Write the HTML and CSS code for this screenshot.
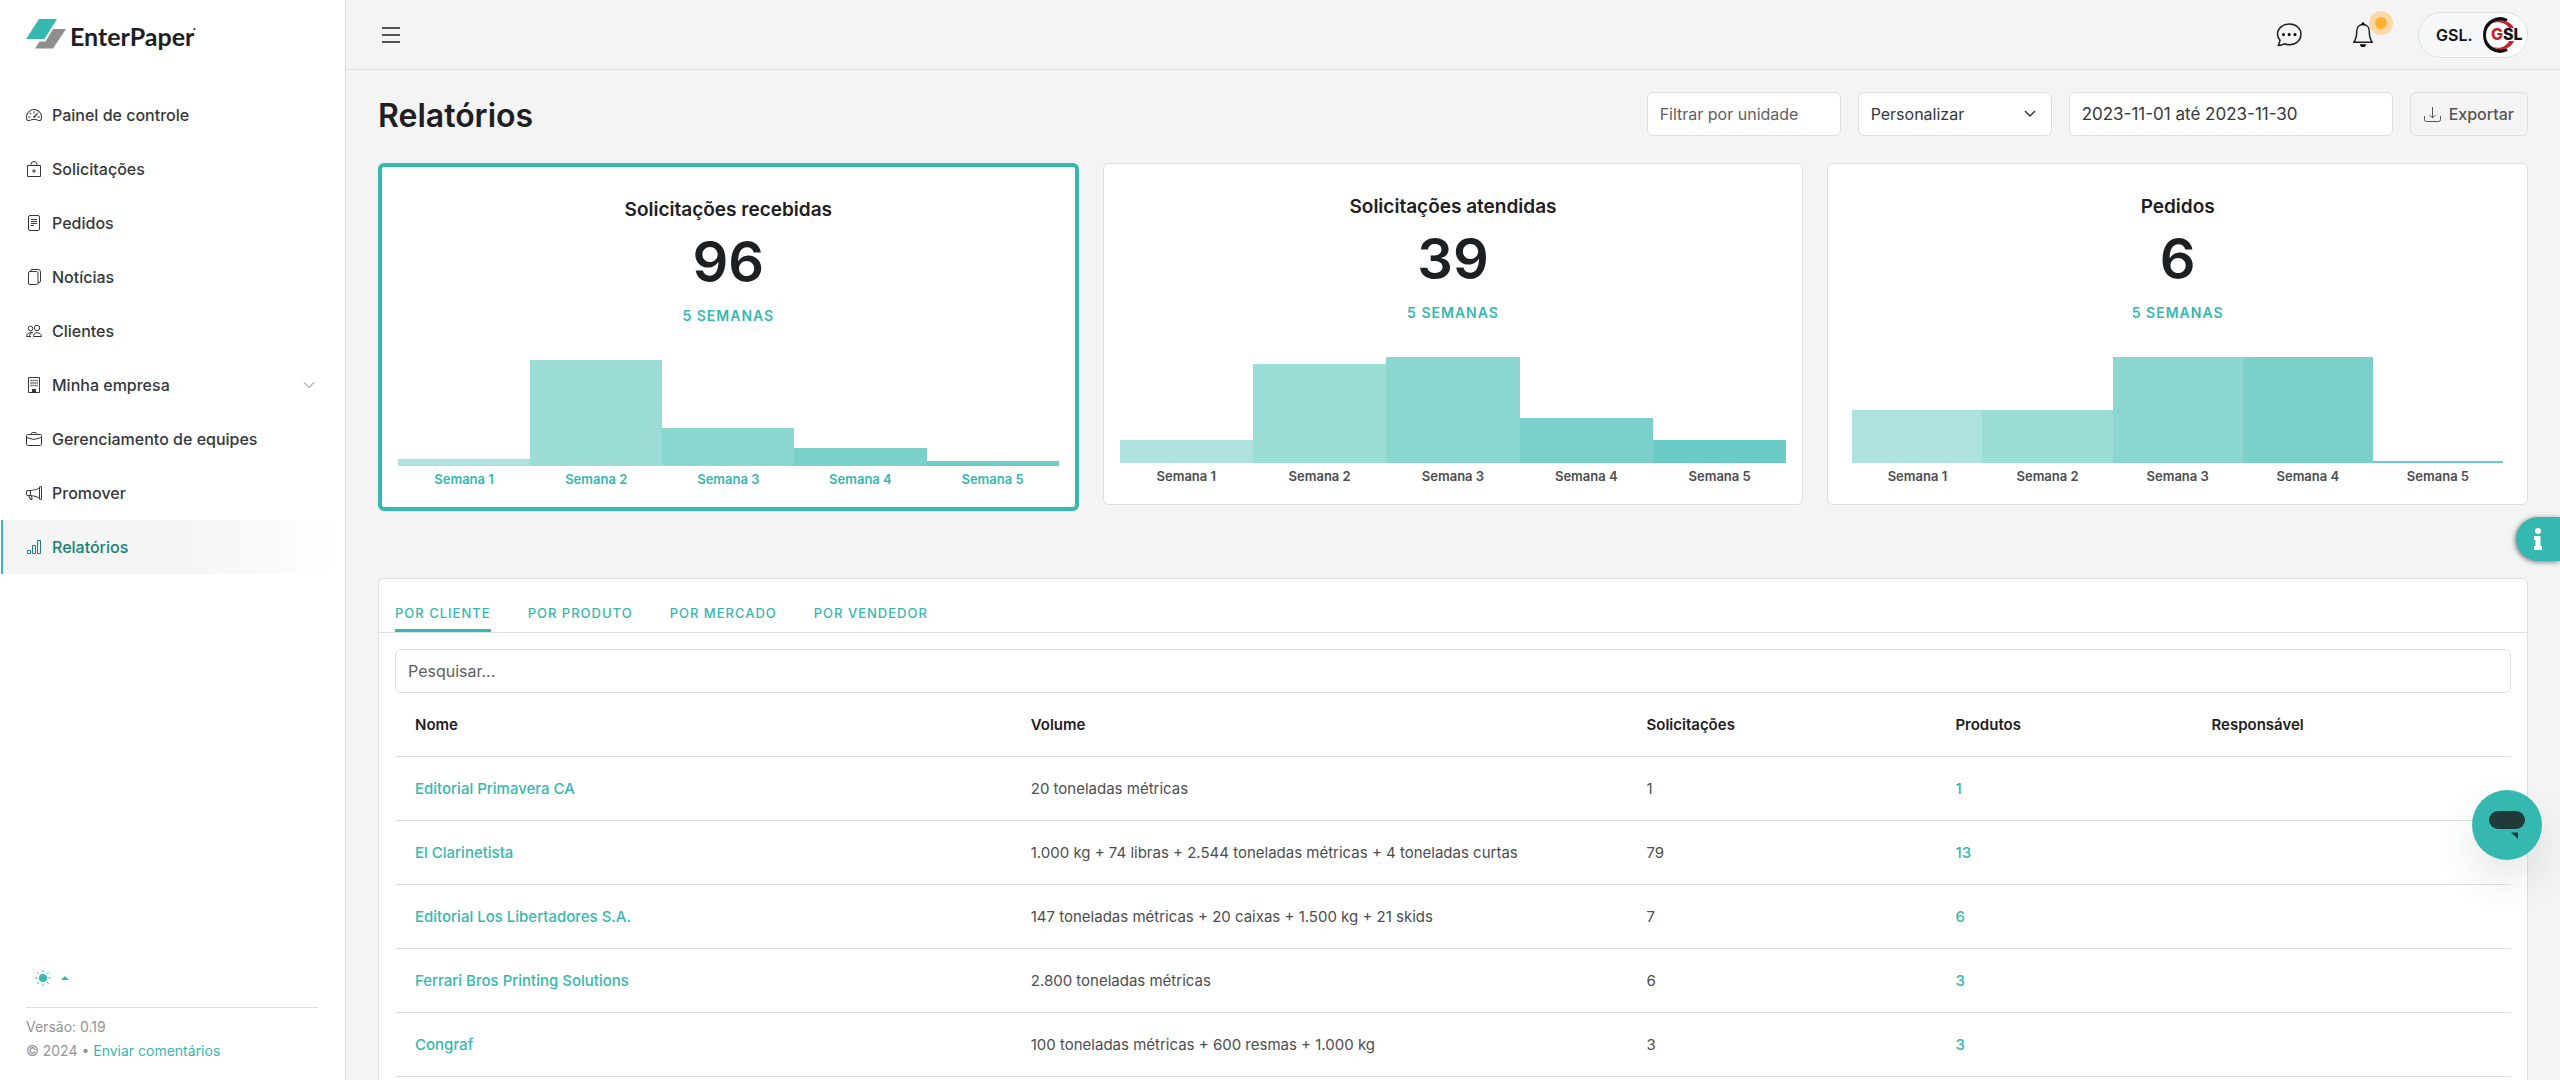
FILE: index.html
```html
<!DOCTYPE html>
<html lang="pt-BR">
<head>
<meta charset="utf-8">
<meta name="viewport" content="width=device-width, initial-scale=1">
<title>EnterPaper – Relatórios</title>
<link rel="stylesheet" href="styles.css">
</head>
<body>
<div class="app">
  <aside class="sidebar">
    <a class="brand" href="#" aria-label="EnterPaper">
      <svg class="brand-mark" width="40" height="30" viewBox="0 0 40 30"><path d="M13 0h18L18.500 20H0z" fill="#35b8b0"/><path d="M27 10h13L27 29.500H9l4.500-7h6z" fill="#8f8f8f"/></svg>
      <span class="brand-name">EnterPaper</span>
      <svg class="brand-dot" width="3" height="12" viewBox="0 0 3 12"><circle cx="1.500" cy="10" r="1" fill="#1d2023"/></svg>
    </a>
    <nav class="menu">
      <a class="menu-item" href="#"><svg class="icon" viewBox="0 0 16 16"><path d="M8 4a.5.5 0 0 1 .5.5V6a.5.5 0 0 1-1 0V4.500A.5.5 0 0 1 8 4M3.732 5.732a.5.5 0 0 1 .707 0l.915.914a.5.5 0 1 1-.708.708l-.914-.915a.5.5 0 0 1 0-.707M2 10a.5.5 0 0 1 .5-.5h1.586a.5.5 0 0 1 0 1H2.500A.5.5 0 0 1 2 10m9.500 0a.5.5 0 0 1 .5-.5h1.500a.5.5 0 0 1 0 1H12a.5.5 0 0 1-.5-.5m.754-4.246a.39.39 0 0 0-.527-.02L7.547 9.310a.91.91 0 1 0 1.302 1.258l3.434-4.297a.39.39 0 0 0-.029-.518z"/><path fill-rule="evenodd" d="M0 10a8 8 0 1 1 15.547 2.661c-.442 1.253-1.845 1.602-2.932 1.250C11.309 13.488 9.475 13 8 13c-1.474 0-3.310.488-4.615.911-1.087.352-2.490.003-2.932-1.250A8 8 0 0 1 0 10m8-7a7 7 0 0 0-6.603 9.329c.203.575.923.876 1.680.630C4.397 12.533 6.358 12 8 12s3.604.532 4.923.960c.757.245 1.477-.056 1.680-.631A7 7 0 0 0 8 3"/></svg>Painel de controle</a>
      <a class="menu-item" href="#"><svg class="icon line" viewBox="0 0 16 16"><path d="M1.500 4.500h13v11h-13zM5 4.500v-1a3 3 0 0 1 6 0v1M8 8v4M6 10h4"/></svg>Solicitações</a>
      <a class="menu-item" href="#"><svg class="icon line" viewBox="0 0 16 16"><rect x="2.500" y=".5" width="11" height="15" rx="1.500"/><path d="M5 4.500h6M5 6.500h6M5 8.500h6M5 10.500h3"/></svg>Pedidos</a>
      <a class="menu-item" href="#"><svg class="icon line" viewBox="0 0 16 16"><rect x="2.500" y="2.500" width="9.500" height="13" rx="1.500"/><path d="M4.500 2.500V2A1.500 1.500 0 0 1 6 .5h6A2.500 2.500 0 0 1 14.500 3v9a1.500 1.500 0 0 1-1.500 1.500h-1"/></svg>Notícias</a>
      <a class="menu-item" href="#"><svg class="icon line" viewBox="0 0 16 16"><circle cx="11" cy="5" r="2.700"/><path d="M7.500 13.500c0-2 1.200-3.800 3.500-3.800s4.500 1.800 4.500 3.800zM6.900 9.900C6.300 9.700 5.700 9.600 5 9.600c-3 0-4.500 2-4.500 3.900h4.500"/><circle cx="4.500" cy="5.500" r="2.300"/><path d="M3 13.500l3-5"/></svg>Clientes</a>
      <a class="menu-item" href="#"><svg class="icon line" viewBox="0 0 16 16"><path d="M2.500.5h11v15h-11zM6.500 15.500v-3h3v3"/><path d="M4.500 3.500h8M4.500 6h8M4.500 8.500h8" stroke-dasharray="1.200 .8" stroke-width="1.400"/><path d="M6.500 12.500h3v3h-3z" fill="currentColor"/></svg>Minha empresa<svg class="menu-arrow" width="12" height="12" viewBox="0 0 12 12"><path d="M1 3.500l5 5 5-5" fill="none" stroke="currentColor"/></svg></a>
      <a class="menu-item" href="#"><svg class="icon line" viewBox="0 0 16 16"><rect x=".5" y="3.500" width="15" height="11" rx="1"/><path d="M5.500 3.500v-1a1 1 0 0 1 1-1h3a1 1 0 0 1 1 1v1M.5 6.500L8 8.500l7.500-2"/></svg>Gerenciamento de equipes</a>
      <a class="menu-item" href="#"><svg class="icon" viewBox="0 0 16 16"><path d="M13 2.500a1.500 1.500 0 0 1 3 0v11a1.500 1.500 0 0 1-3 0v-.214c-2.162-1.241-4.490-1.843-6.912-2.083l.405 2.712A1 1 0 0 1 5.510 15.100h-.548a1 1 0 0 1-.916-.599l-1.850-3.490-.202-.003A2.014 2.014 0 0 1 0 9V7a2.020 2.020 0 0 1 1.992-2.013 75 75 0 0 0 2.483-.075c3.043-.154 6.148-.849 8.525-2.199zm1 0v11a.5.5 0 0 0 1 0v-11a.5.5 0 0 0-1 0m-1 1.350c-2.344 1.205-5.209 1.842-8 2.033v4.233q.270.015.537.036c2.568.189 5.093.744 7.463 1.993zm-9 6.215v-4.130a95 95 0 0 1-1.992.052A1.020 1.020 0 0 0 1 7v2c0 .550.448 1.002 1.006 1.009A61 61 0 0 1 4 10.065m-.657.975 1.609 3.037.010.024h.548l-.002-.014-.443-2.966a68 68 0 0 0-1.722-.082z"/></svg>Promover</a>
      <a class="menu-item active" href="#" aria-current="page"><svg class="icon line" viewBox="0 0 16 16"><path d="M1.500 11.500h3v3h-3zM6.500 6.500h3v8h-3zM11.500 1.500h3v13h-3z"/></svg>Relatórios</a>
    </nav>
    <footer class="side-footer">
      <button class="theme" type="button" aria-label="Tema"><svg width="16" height="16" viewBox="0 0 16 16"><circle cx="8" cy="8" r="4" fill="currentColor"/><path d="M8 0v2.500M8 13.500V16M0 8h2.500M13.500 8H16M2.300 2.300l1.600 1.600M12.100 12.100l1.600 1.600M2.300 13.700l1.600-1.600M12.100 3.900l1.600-1.600" stroke="currentColor"/></svg><svg width="8" height="4" viewBox="0 0 8 4"><path d="M0 4l4-4 4 4z" fill="currentColor"/></svg></button>
      <div class="legal">
        <p>Versão: 0.19</p>
        <p>© 2024 • <a href="#">Enviar comentários</a></p>
      </div>
    </footer>
  </aside>

  <div class="content">
    <header class="topbar">
      <button class="icon-btn" type="button" aria-label="Menu"><svg width="18" height="16" viewBox="0 0 18 16"><path d="M0 1h18M0 8h18M0 15h18" stroke="currentColor" stroke-width="1.500"/></svg></button>
      <div class="top-actions">
        <button class="icon-btn" type="button" aria-label="Mensagens"><svg width="26" height="24" viewBox="0 0 26 24"><path d="M13.500 1C7 1 1.500 5.300 1.500 11c0 2.600 1 4.600 2.600 6.300L2.300 22.600c2.600-.2 4.400-.8 5.900-1.800 1.700.7 3.400 1 5.300 1C20 21.800 25 17 25 11.300S20 1 13.500 1z" fill="none" stroke="currentColor" stroke-width="1.500" stroke-linejoin="round"/><circle cx="7.500" cy="11.500" r="1.500"/><circle cx="13.200" cy="11.500" r="1.500"/><circle cx="19" cy="11.500" r="1.500"/></svg></button>
        <button class="icon-btn bell" type="button" aria-label="Notificações"><svg width="22" height="26" viewBox="0 0 22 26"><path d="M11 2.500C7 2.500 4.700 5.500 4.700 9.500c0 4.500-1.200 8.500-3 10.700h18.600c-1.800-2.200-3-6.200-3-10.700 0-4-2.300-7-6.300-7z" fill="none" stroke="currentColor" stroke-width="1.500" stroke-linejoin="round"/><circle cx="11" cy="1.800" r="1.500"/><path d="M8 22.300h6a3 2.800 0 0 1-6 0z"/></svg><span class="dot"></span></button>
        <button class="account" type="button"><span>GSL.</span><svg class="avatar" width="44" height="44" viewBox="0 0 44 44"><circle cx="22" cy="22" r="22" fill="#fff"/><path d="M24 7.500A16 16 0 1 0 24 36.500" fill="none" stroke="#111" stroke-width="3.500"/><path d="M10 10C16 5.500 27 7 31 15h-5C23 10 16 8 10 10zM10 34c7 4 17 3 21-6h-5c-3 6-9 8-16 6z" fill="#c4262e"/><text class="avatar-text" x="8" y="27" fill="#c4262e">G<tspan fill="#111">SL</tspan></text></svg></button>
      </div>
    </header>

    <main class="page">
      <div class="page-head">
        <h1>Relatórios</h1>
        <form class="filters">
          <input class="field unit" type="text" placeholder="Filtrar por unidade" aria-label="Filtrar por unidade">
          <select class="field period" aria-label="Período"><option>Personalizar</option></select>
          <input class="field range" type="text" value="2023-11-01 até 2023-11-30" aria-label="Intervalo de datas">
          <button class="export" type="button"><svg width="17" height="15" viewBox="0 0 17 15"><path d="M.5 9v3.500a2 2 0 0 0 2 2h12a2 2 0 0 0 2-2V9M8.500 0v11M5.500 8l3 3 3-3" fill="none" stroke="currentColor"/></svg>Exportar</button>
        </form>
      </div>

      <section class="cards">
        <article class="card selected">
          <h2>Solicitações recebidas</h2>
          <p class="total">96</p>
          <p class="span">5 semanas</p>
          <div class="chart">
            <div class="bar"><i style="height:7px"></i>Semana 1</div>
            <div class="bar"><i style="height:106px"></i>Semana 2</div>
            <div class="bar"><i style="height:38px"></i>Semana 3</div>
            <div class="bar"><i style="height:18px"></i>Semana 4</div>
            <div class="bar"><i style="height:5px"></i>Semana 5</div>
          </div>
        </article>
        <article class="card">
          <h2>Solicitações atendidas</h2>
          <p class="total">39</p>
          <p class="span">5 semanas</p>
          <div class="chart">
            <div class="bar"><i style="height:23px"></i>Semana 1</div>
            <div class="bar"><i style="height:99px"></i>Semana 2</div>
            <div class="bar"><i style="height:106px"></i>Semana 3</div>
            <div class="bar"><i style="height:45px"></i>Semana 4</div>
            <div class="bar"><i style="height:23px"></i>Semana 5</div>
          </div>
        </article>
        <article class="card">
          <h2>Pedidos</h2>
          <p class="total">6</p>
          <p class="span">5 semanas</p>
          <div class="chart inset">
            <div class="bar"><i style="height:53px"></i>Semana 1</div>
            <div class="bar"><i style="height:53px"></i>Semana 2</div>
            <div class="bar"><i style="height:106px"></i>Semana 3</div>
            <div class="bar"><i style="height:106px"></i>Semana 4</div>
            <div class="bar"><i style="height:2px"></i>Semana 5</div>
          </div>
        </article>
      </section>

      <section class="panel">
        <div class="tabs" role="tablist">
          <button class="tab current" type="button" role="tab" aria-selected="true">Por cliente</button>
          <button class="tab" type="button" role="tab">Por produto</button>
          <button class="tab" type="button" role="tab">Por mercado</button>
          <button class="tab" type="button" role="tab">Por vendedor</button>
        </div>
        <div class="panel-body">
          <input class="field search" type="search" placeholder="Pesquisar..." aria-label="Pesquisar">
          <table class="report">
            <colgroup><col class="c-name"><col class="c-volume"><col class="c-requests"><col class="c-products"><col></colgroup>
            <thead><tr><th>Nome</th><th>Volume</th><th>Solicitações</th><th>Produtos</th><th>Responsável</th></tr></thead>
            <tbody>
              <tr><td><a href="#">Editorial Primavera CA</a></td><td>20 toneladas métricas</td><td>1</td><td><a href="#">1</a></td><td></td></tr>
              <tr><td><a href="#">El Clarinetista</a></td><td>1.000 kg + 74 libras + 2.544 toneladas métricas + 4 toneladas curtas</td><td>79</td><td><a href="#">13</a></td><td></td></tr>
              <tr><td><a href="#">Editorial Los Libertadores S.A.</a></td><td>147 toneladas métricas + 20 caixas + 1.500 kg + 21 skids</td><td>7</td><td><a href="#">6</a></td><td></td></tr>
              <tr><td><a href="#">Ferrari Bros Printing Solutions</a></td><td>2.800 toneladas métricas</td><td>6</td><td><a href="#">3</a></td><td></td></tr>
              <tr><td><a href="#">Congraf</a></td><td>100 toneladas métricas + 600 resmas + 1.000 kg</td><td>3</td><td><a href="#">3</a></td><td></td></tr>
            </tbody>
          </table>
        </div>
      </section>
    </main>
  </div>
</div>
<button class="info-tab" type="button" aria-label="Informações"><svg width="10" height="22" viewBox="0 0 10 22"><circle cx="5" cy="3" r="3" fill="#fff"/><path d="M1 8h6.500v10H9v4H1v-4h1.500v-6H1z" fill="#fff"/></svg></button>
<button class="chat" type="button" aria-label="Chat"><svg width="36" height="28" viewBox="0 0 36 28"><rect width="36" height="18" rx="9" fill="#203a3a"/><path d="M22 21.500h7V28z" fill="#203a3a"/></svg></button>
</body>
</html>
```
FILE: styles.css
```css
:root {
  --teal: #35b8b0;
  --ink: #1d2023;
  --text: #4c4e50;
  --line: #dedfe0;
  --bg: #f4f4f4;
}

* { box-sizing: border-box; }

body {
  margin: 0;
  font: 400 16px/24px Inter, "Liberation Sans", sans-serif;
  color: var(--text);
  background: var(--bg);
}

h1, h2, p { margin: 0; }
a { color: var(--teal); text-decoration: none; }
button, input, select { font: inherit; color: inherit; }
button { cursor: pointer; padding: 0; border: 0; background: none; }

.app { display: flex; height: 100vh; overflow: hidden; }

/* Sidebar */
.sidebar {
  flex: 0 0 346px;
  display: flex;
  flex-direction: column;
  background: #fff;
  border-right: 1px solid var(--line);
}
.brand { display: flex; gap: 4px; height: 88px; padding: 19px 26px; }
.brand-name { font: 700 25px/34px Lato, sans-serif; color: var(--ink); }
.brand-dot { margin-left: -5px; }
.menu-item {
  display: flex;
  align-items: center;
  gap: 10px;
  height: 54px;
  margin-left: 1px;
  padding: 0 30px 0 25px;
  font-weight: 500;
  color: #34383c;
}
.menu-item.active {
  padding-left: 23px;
  border-left: 2px solid var(--teal);
  color: #148276;
  background: linear-gradient(90deg, var(--bg) 50%, #fff);
}
.icon { width: 16px; height: 16px; fill: currentColor; }
.icon.line { fill: none; stroke: currentColor; }
.menu-arrow { margin-left: auto; color: #777; }
.side-footer { margin-top: auto; padding: 0 27px 17px 26px; font-size: 14px; color: #949494; }
.theme { display: flex; align-items: center; gap: 10px; height: 24px; margin: 0 9px 17px; color: var(--teal); }
.legal { padding-top: 7px; border-top: 1px solid var(--line); }

/* Top bar */
.content { flex: 1; min-width: 0; }
.topbar {
  display: flex;
  align-items: center;
  justify-content: space-between;
  height: 70px;
  padding: 0 32px 0 36px;
  border-bottom: 1px solid var(--line);
}
.icon-btn { display: flex; color: var(--ink); }
.top-actions { display: flex; align-items: center; gap: 50px; }
.bell { position: relative; margin-right: -6px; }
.dot {
  position: absolute;
  top: -11px;
  left: 17px;
  width: 24px;
  height: 24px;
  border: 6px solid #fcd9a5;
  border-radius: 50%;
  background: #ffb02e;
}
.account {
  display: flex;
  align-items: center;
  justify-content: space-between;
  width: 110px;
  height: 46px;
  padding-left: 17px;
  border: 1px solid var(--line);
  border-radius: 23px;
  background: #f7f8fa;
  font-weight: 600;
  color: #111;
}
.avatar { border-radius: 50%; }
.avatar-text { font-size: 16px; font-weight: 800; }

/* Page heading and filters */
.page { padding: 22px 32px 0; }
.page-head { display: flex; align-items: center; justify-content: space-between; height: 44px; margin-bottom: 27px; }
h1 { padding-top: 4px; font-size: 32px; line-height: 40px; font-weight: 600; color: var(--ink); }
.filters { display: flex; gap: 17px; }
.field {
  height: 44px;
  padding: 0 12px;
  border: 1px solid var(--line);
  border-radius: 6px;
  background: #fff;
  color: #34383c;
}
.field::placeholder { color: #5d6063; opacity: 1; }
.unit, .period { width: 194px; }
.period {
  appearance: none;
  background: #fff url("data:image/svg+xml,%3Csvg xmlns='http://www.w3.org/2000/svg' viewBox='0 0 12 8'%3E%3Cpath d='M1 1l5 5 5-5' fill='none' stroke='%2334383c' stroke-width='1.500'/%3E%3C/svg%3E") no-repeat right 15px center / 12px 8px;
}
.range { width: 324px; font-size: 17px; }
.export {
  display: flex;
  align-items: center;
  gap: 8px;
  height: 44px;
  padding: 0 13px;
  border: 1px solid var(--line);
  border-radius: 6px;
  font-weight: 500;
  color: #555;
}

/* Summary cards */
.cards { display: grid; grid-template-columns: repeat(3, 1fr); gap: 24px; align-items: start; }
.card {
  padding: 31px 16px 16px;
  border: 1px solid var(--line);
  border-radius: 6px;
  background: #fff;
  text-align: center;
}
.card.selected { border: 4px solid var(--teal); }
.card h2 { font-size: 19px; line-height: 24px; font-weight: 600; color: var(--ink); }
.total { font-size: 56px; line-height: 80px; font-weight: 600; color: var(--ink); }
.span { line-height: 28px; font-size: 14px; font-weight: 600; letter-spacing: 1px; text-transform: uppercase; color: var(--teal); }
.chart { display: flex; align-items: flex-end; height: 161px; }
.chart.inset { padding-left: 8px; padding-right: 8px; }
.bar { flex: 1; font-size: 13px; line-height: 24px; font-weight: 600; }
.bar i { display: block; margin-bottom: 1px; }
.bar:nth-child(1) i { background: #ade2de; }
.bar:nth-child(2) i { background: #9cdcd6; }
.bar:nth-child(3) i { background: #8bd7d0; }
.bar:nth-child(4) i { background: #7bd1ca; }
.bar:nth-child(5) i { background: #6bcbc6; }
.selected .bar { color: var(--teal); }

/* Report panel */
.panel { margin-top: 67px; border: 1px solid var(--line); border-radius: 6px; background: #fff; }
.tabs { display: flex; gap: 37px; height: 54px; padding: 18px 16px 0; border-bottom: 1px solid var(--line); }
.tab { border-bottom: 3px solid transparent; font-size: 13px; font-weight: 500; letter-spacing: 1px; text-transform: uppercase; color: var(--teal); }
.tab.current { border-color: var(--teal); }
.panel-body { padding: 16px; }
.search { display: block; width: 100%; }
.report { width: 100%; table-layout: fixed; border-collapse: separate; border-spacing: 0; font-size: 15px; }
.report th, .report td { height: 64px; padding: 0 20px; border-bottom: 1px solid var(--line); text-align: left; }
.report th { font-weight: 600; color: var(--ink); }
.report a { font-weight: 500; }
.c-name, .c-volume { width: 29.1%; }
.c-requests { width: 14.6%; }
.c-products { width: 12.1%; }

/* Floating controls */
.info-tab {
  position: fixed;
  top: 517px;
  right: 0;
  display: flex;
  align-items: center;
  width: 44px;
  height: 44px;
  padding-left: 17px;
  border-radius: 22px 0 0 22px;
  background: var(--teal);
  box-shadow: -1px 1px 5px rgba(0, 0, 0, .5);
}
.chat {
  position: fixed;
  right: 18px;
  bottom: 220px;
  display: grid;
  place-items: center;
  width: 70px;
  height: 70px;
  border-radius: 50%;
  background: var(--teal);
  box-shadow: 0 20px 40px rgba(32, 58, 58, .12);
}
```
